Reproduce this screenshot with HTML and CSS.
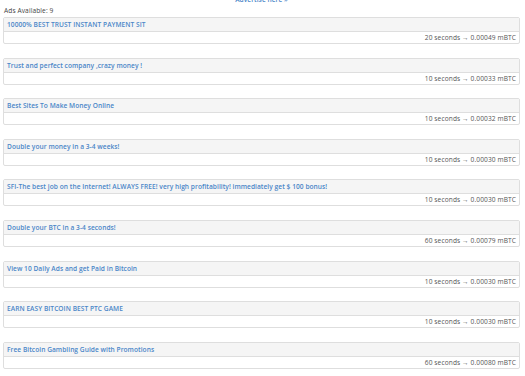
FILE: index.html
```html
<!DOCTYPE html>
<html>
<head>
<meta charset="utf-8">
<link rel="stylesheet" href="styles.css">
</head>
<body>
<div class="page">
  <div class="advertise"><a href="#">Advertise here »</a></div>
  <div class="available">Ads Available: 9</div>
  <div class="ads">
    <div class="card"><div class="card-head"><a href="#">10000% BEST TRUST INSTANT PAYMENT SIT</a></div><div class="card-body">20 seconds → 0.00049 mBTC</div></div>
    <div class="card"><div class="card-head"><a href="#">Trust and perfect company ,crazy money !</a></div><div class="card-body">10 seconds → 0.00033 mBTC</div></div>
    <div class="card"><div class="card-head"><a href="#">Best Sites To Make Money Online</a></div><div class="card-body">10 seconds → 0.00032 mBTC</div></div>
    <div class="card"><div class="card-head"><a href="#">Double your money in a 3-4 weeks!</a></div><div class="card-body">10 seconds → 0.00030 mBTC</div></div>
    <div class="card"><div class="card-head"><a href="#">SFI-The best job on the Internet! ALWAYS FREE! very high profitability! immediately get $ 100 bonus!</a></div><div class="card-body">10 seconds → 0.00030 mBTC</div></div>
    <div class="card"><div class="card-head"><a href="#">Double your BTC in a 3-4 seconds!</a></div><div class="card-body">60 seconds → 0.00079 mBTC</div></div>
    <div class="card"><div class="card-head"><a href="#">View 10 Daily Ads and get Paid in Bitcoin</a></div><div class="card-body">10 seconds → 0.00030 mBTC</div></div>
    <div class="card"><div class="card-head"><a href="#">EARN EASY BITCOIN BEST PTC GAME</a></div><div class="card-body">10 seconds → 0.00030 mBTC</div></div>
    <div class="card"><div class="card-head"><a href="#">Free Bitcoin Gambling Guide with Promotions</a></div><div class="card-body">60 seconds → 0.00080 mBTC</div></div>
  </div>
</div>
</body>
</html>
```
FILE: styles.css
```css
html, body {
  margin: 0;
  padding: 0;
  background: #ffffff;
}
body {
  font-family: "Open Sans", "Noto Sans", sans-serif;
  font-size: 6.6px;
  letter-spacing: 0.1px;
  color: #555555;
}
.page {
  padding: 0 5px 0 3px;
  margin-top: -5px;
}
a {
  color: #4a86c8;
  text-decoration: none;
  font-weight: 600;
  letter-spacing: 0.05px;
}
.advertise {
  text-align: center;
  height: 9px;
  line-height: 9px;
}
.available {
  height: 13px;
  line-height: 13px;
  padding-left: 1px;
  color: #444;
}
.ads {
  display: flex;
  flex-direction: column;
  gap: 13.6px;
}
.card {
  border: 1px solid #dedede;
  border-radius: 2px;
  background: #fff;
}
.card-head {
  background: #f5f5f5;
  border-bottom: 1px solid #dedede;
  height: 13px;
  line-height: 13px;
  padding-left: 3px;
}
.card-body {
  height: 11px;
  line-height: 11px;
  text-align: right;
  padding-right: 3px;
}
```
